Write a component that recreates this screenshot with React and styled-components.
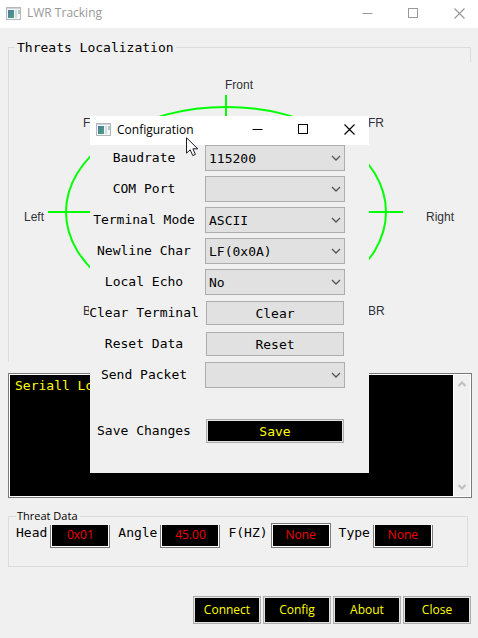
import React from 'react';
import styled, { createGlobalStyle } from 'styled-components';

const MONO = '"DejaVu Sans Mono", "Liberation Mono", monospace';
const SANS = '"Open Sans", "Noto Sans", sans-serif';

const GlobalStyle = createGlobalStyle`
  *, *::before, *::after { box-sizing: border-box; }
  body { margin: 0; background: #f0f0f0; color: #000; font: 12px/16px ${SANS}; }
  button, input, select, textarea { margin: 0; border-radius: 0; outline: none; }
`;

const Window = styled.div`
  position: relative;
  display: flex;
  flex-direction: column;
  min-height: 100vh;
  overflow: hidden;
`;

const TitleBar = styled.header`
  display: flex;
  align-items: center;
  height: ${(p) => (p.$active ? 29 : 28)}px;
  padding: 0 ${(p) => (p.$active ? 5 : 4)}px 2px 6px;
  gap: 6px;
  background: #fff;
  color: ${(p) => (p.$active ? '#000' : '#999')};
`;

const Title = styled.h1`
  flex: 1;
  margin: 0;
  font: 12px/16px ${SANS};
`;

const WindowButtons = styled.div`
  display: flex;
  gap: 16px;
`;

const WindowButton = styled.button`
  display: grid;
  place-items: center;
  width: 30px;
  height: 24px;
  padding: 0;
  border: 0;
  background: none;
  color: inherit;
`;

const Content = styled.main`
  flex: 1;
  padding: 12px 6px 15px 8px;
`;

const LocalizationGroup = styled.section`
  position: relative;
  height: 322px;
  margin-right: 1px;
`;

const LocalizationTitle = styled.h2`
  display: flex;
  align-items: center;
  gap: 2px;
  height: 15px;
  margin: 0;
  font: 13px/15px ${MONO};
  &::before { content: ''; width: 7px; border-top: 1px solid #dcdcdc; }
  &::after { content: ''; flex: 1; border-top: 1px solid #dcdcdc; }
`;

const LocalizationFrame = styled.div`
  height: 315px;
  margin-top: -8px;
  border-left: 1px solid #dcdcdc;
  background: linear-gradient(#dcdcdc, #dcdcdc) right top / 1px 15px no-repeat;
`;

const Radar = styled.svg`
  display: block;
  width: 100%;
  height: 315px;
`;

const RadarText = styled.text`
  font: 12px "Liberation Sans", sans-serif;
  fill: #303038;
`;

const SerialLog = styled.div`
  display: flex;
  height: 125px;
  margin-top: 11px;
  padding: 1px;
  border: 1px solid #7a7a7a;
  background: #fff;
`;

const LogText = styled.textarea`
  flex: 1;
  min-width: 0;
  padding: 2px 5px;
  border: 0;
  resize: none;
  overflow: hidden;
  background: #000;
  color: #ff0;
  font: 13px/17px ${MONO};
`;

const ScrollBar = styled.div`
  display: flex;
  flex-direction: column;
  align-items: center;
  justify-content: space-between;
  width: 16px;
  margin-left: 1px;
  padding: 5px 0;
  background: #f0f0f0;
  color: #bfbfbf;
`;

const ThreatGroup = styled.fieldset`
  display: flex;
  gap: 8px;
  height: 59px;
  margin: 10px 4px 0 0;
  padding: 0 7px;
  border: 1px solid #dcdcdc;
`;

const Legend = styled.legend`
  padding: 0 2px 0 1px;
  font: 11px/16px ${SANS};
`;

const Field = styled.label`
  display: flex;
  align-items: flex-end;
  gap: 3px;
  height: 24px;
`;

const FieldName = styled.span`
  font: 13px/18px ${MONO};
  align-self: flex-start;
`;

const FieldValue = styled.input`
  width: 60px;
  height: ${(p) => (p.$raised ? 25 : 23)}px;
  padding: 0 0 ${(p) => (p.$raised ? 2 : 4)}px;
  border: 1px solid #7a7a7a;
  border-top-width: ${(p) => (p.$raised ? 1 : 0)}px;
  background: #000;
  box-shadow: inset 1px 0 #fff, inset -1px 0 #fff, inset 0 -1px #fff
    ${(p) => (p.$raised ? ', inset 0 1px #fff' : '')};
  color: #f00000;
  text-align: center;
  font: 12px/16px ${SANS};
`;

const Actions = styled.div`
  display: flex;
  justify-content: flex-end;
  gap: 2px;
  margin: 29px 1px 0 0;
`;

const DarkButton = styled.button`
  height: 28px;
  width: 68px;
  padding: 0;
  border: 1px solid #adadad;
  background: #000;
  box-shadow: inset 0 0 0 1px #e1e1e1;
  color: #ff0;
  font: 12px/16px ${SANS};
`;

const Dialog = styled.div`
  position: absolute;
  top: 116px;
  left: 90px;
  width: 279px;
  background: #f0f0f0;
`;

const Settings = styled.form`
  display: grid;
  gap: 5px;
  padding: 0 24px 29px 0;
`;

const SettingRow = styled.div`
  display: grid;
  grid-template-columns: 108px 1fr;
  column-gap: 7px;
  align-items: center;
  height: 26px;
  margin-top: ${(p) => (p.$apart ? 25 : 0)}px;
`;

const SettingLabel = styled.label`
  justify-self: center;
  background: #f0f0f0;
  font: 13px/16px ${MONO};
  white-space: nowrap;
`;

const SelectBox = styled.div`
  display: grid;
  align-items: center;
  color: #555;
  > * { grid-area: 1 / 1; }
  > svg { justify-self: end; margin-right: 4px; pointer-events: none; }
`;

const Select = styled.select`
  appearance: none;
  width: 100%;
  height: 26px;
  padding: 1px 20px 0 3px;
  border: 1px solid #adadad;
  background: #e1e1e1;
  color: #000;
  font: 13px/16px ${MONO};
`;

const SettingButton = styled.button`
  height: 24px;
  margin: 0 1px;
  padding: 1px 0 0;
  border: 1px solid #adadad;
  background: ${(p) => (p.$dark ? '#000' : '#e1e1e1')};
  box-shadow: inset 0 0 0 1px #e1e1e1;
  color: ${(p) => (p.$dark ? '#ff0' : '#000')};
  font: 13px/16px ${MONO};
`;

const Pointer = styled.svg`
  position: absolute;
  top: 21px;
  left: 96px;
  pointer-events: none;
`;

function AppIcon() {
  return (
    <svg width="15" height="13" viewBox="0 0 15 13" aria-hidden="true">
      <defs>
        <linearGradient id="screen" x1="0" y1="0" x2="1" y2="1">
          <stop offset="0" stopColor="#4a78a8" />
          <stop offset="1" stopColor="#4fa37a" />
        </linearGradient>
      </defs>
      <rect x="0.5" y="0.5" width="14" height="12" fill="#f4f6f8" stroke="#b4b9bf" />
      <rect x="1" y="1" width="13" height="1" fill="#cdd3da" />
      <rect x="2" y="3" width="6" height="8" fill="url(#screen)" />
      <rect x="9" y="3" width="2" height="8" fill="#d5dde0" />
      <rect x="12" y="3" width="2" height="4" fill="#a9cdb9" />
    </svg>
  );
}

function ControlGlyph({ kind }) {
  return (
    <svg width="11" height="11" viewBox="0 0 11 11" fill="none" stroke="currentColor" aria-hidden="true">
      {kind === 'Minimize' && <path d="M0.5 5.5h10" />}
      {kind === 'Maximize' && <rect x="0.5" y="0.5" width="9" height="9" />}
      {kind === 'Close' && <path d="M0.5 0.5l10 10M10.5 0.5l-10 10" strokeWidth="1.2" />}
    </svg>
  );
}

function Chevron({ up, bold }) {
  return (
    <svg width="10" height="8" viewBox="0 0 10 8" fill="none" stroke="currentColor" strokeWidth={bold ? 2 : 1.3} aria-hidden="true">
      <path d={up ? 'M1.5 6L5 2.5L8.5 6' : bold ? 'M1.5 2L5 5.5L8.5 2' : 'M1 2L5 6L9 2'} />
    </svg>
  );
}

function Bar({ title, active }) {
  return (
    <TitleBar $active={active}>
      <AppIcon />
      <Title>{title}</Title>
      <WindowButtons>
        {['Minimize', 'Maximize', 'Close'].map((kind) => (
          <WindowButton key={kind} type="button" aria-label={kind}>
            <ControlGlyph kind={kind} />
          </WindowButton>
        ))}
      </WindowButtons>
    </TitleBar>
  );
}

const bearings = [
  ['Front', 216, 42],
  ['FL', 74, 80],
  ['FR', 359, 80],
  ['Left', 15, 174],
  ['Right', 417, 174],
  ['BL', 74, 268],
  ['BR', 359, 268],
];

const settings = [
  { id: 'baudrate', label: 'Baudrate', options: ['115200', '9600'] },
  { id: 'port', label: 'COM Port', options: [''] },
  { id: 'mode', label: 'Terminal Mode', options: ['ASCII'] },
  { id: 'newline', label: 'Newline Char', options: ['LF(0x0A)'] },
  { id: 'echo', label: 'Local Echo', options: ['No', 'Yes'] },
  { id: 'clear', label: 'Clear Terminal', action: 'Clear' },
  { id: 'reset', label: 'Reset Data', action: 'Reset' },
  { id: 'packet', label: 'Send Packet', options: [''] },
  { id: 'save', label: 'Save Changes', action: 'Save', primary: true },
];

const threat = [
  { name: 'Head', value: '0x01' },
  { name: 'Angle', value: '45.00' },
  { name: 'F(HZ)', value: 'None', raised: true },
  { name: 'Type', value: 'None' },
];

function Setting({ id, label, options, action, primary }) {
  return (
    <SettingRow $apart={primary}>
      <SettingLabel htmlFor={id}>{label}</SettingLabel>
      {options ? (
        <SelectBox>
          <Select id={id}>
            {options.map((o) => <option key={o}>{o}</option>)}
          </Select>
          <Chevron />
        </SelectBox>
      ) : (
        <SettingButton id={id} type="button" $dark={primary}>{action}</SettingButton>
      )}
    </SettingRow>
  );
}

export default function App() {
  return (
    <Window>
      <GlobalStyle />
      <Bar title="LWR Tracking" />
      <Content>
        <LocalizationGroup>
          <LocalizationTitle>Threats Localization</LocalizationTitle>
          <LocalizationFrame>
            <Radar viewBox="0 0 462 315" preserveAspectRatio="xMinYMin meet">
              <g fill="none" stroke="#00ff00" strokeWidth="2">
                <ellipse cx="217" cy="165" rx="160" ry="105" />
                <path d="M39 165H394M217 48V282" />
              </g>
              {bearings.map(([name, x, y]) => (
                <RadarText key={name} x={x} y={y}>{name}</RadarText>
              ))}
            </Radar>
          </LocalizationFrame>
        </LocalizationGroup>
        <SerialLog>
          <LogText aria-label="Serial log" spellCheck={false} defaultValue="Seriall Log" />
          <ScrollBar>
            <Chevron up bold />
            <Chevron bold />
          </ScrollBar>
        </SerialLog>
        <ThreatGroup>
          <Legend>Threat Data</Legend>
          {threat.map(({ name, value, raised }) => (
            <Field key={name}>
              <FieldName>{name}</FieldName>
              <FieldValue defaultValue={value} $raised={raised} />
            </Field>
          ))}
        </ThreatGroup>
        <Actions>
          {['Connect', 'Config', 'About', 'Close'].map((name) => (
            <DarkButton key={name} type="button">{name}</DarkButton>
          ))}
        </Actions>
      </Content>
      <Dialog role="dialog" aria-label="Configuration">
        <Bar title="Configuration" active />
        <Settings>
          {settings.map((s) => <Setting key={s.id} {...s} />)}
        </Settings>
        <Pointer width="13" height="20" viewBox="0 0 13 20" aria-hidden="true">
          <path d="M0.5 0.8V16.2L4.2 12.8L6.8 18.6L9.4 17.4L6.9 11.8H11.8Z" fill="#fff" stroke="#1c1c28" />
        </Pointer>
      </Dialog>
    </Window>
  );
}
